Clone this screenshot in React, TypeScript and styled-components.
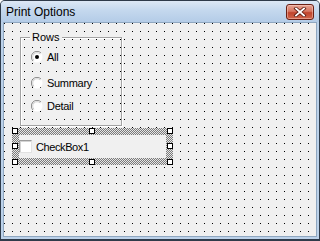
import React from 'react'
import styled, { createGlobalStyle } from 'styled-components'

const Global = createGlobalStyle`
  html, body {
    margin: 0;
    padding: 0;
    background: #fff;
  }
  body {
    font-family: "Liberation Sans", Arial, sans-serif;
  }
`

const dots = `
  background-color: #f0f0f0;
  background-image:
    linear-gradient(90deg, #f0f0f0 7px, transparent 7px),
    linear-gradient(#f0f0f0 7px, #000 7px);
  background-size: 8px 8px;
`

const Window = styled.div`
  width: 320px;
  height: 241px;
  box-sizing: border-box;
  display: flex;
  flex-direction: column;
  border: 1px solid #2f3b4a;
  border-bottom-width: 2px;
  border-radius: 5px 5px 0 0;
  background: #bcd2ea;
  overflow: hidden;
`

const TitleBar = styled.div`
  height: 21px;
  flex: none;
  display: flex;
  align-items: center;
  justify-content: space-between;
  padding: 0 5px 0 5px;
  background: linear-gradient(#dde8f5, #c4d8ee 45%, #b4cce7);
`

const Title = styled.span`
  font-size: 12px;
  color: #000;
  padding-top: 1px;
`

const CloseButton = styled.div`
  width: 26px;
  height: 14px;
  margin-top: 1px;
  display: flex;
  align-items: center;
  justify-content: center;
  border: 1px solid #6a1f14;
  border-radius: 3px;
  background: linear-gradient(#e8a595, #d67560 45%, #c0442c 55%, #d0664c);
  box-shadow: inset 0 0 0 1px rgba(255, 220, 210, 0.45);
`

const Frame = styled.div`
  flex: 1;
  display: flex;
  padding: 0 2px 2px 2px;
`

const Client = styled.div`
  flex: 1;
  border: 1px solid #8fa7c0;
  display: flex;
  flex-direction: column;
  align-items: flex-start;
  ${dots}
  background-position: 1px 1px;
`

const Fieldset = styled.fieldset`
  box-sizing: border-box;
  margin: 8px 0 0 16px;
  padding: 0;
  width: 102px;
  height: 95px;
  border: 1px solid #a3a3a3;
  box-shadow: inset 1px 1px 0 #fff, 1px 1px 0 #fff;
  ${dots}
  background-position: 4px 2px;
  display: flex;
  flex-direction: column;
`

const Legend = styled.legend`
  margin-left: 9px;
  padding: 0 2px;
  font-size: 11px;
  line-height: 13px;
  color: #000;
  background: #f0f0f0;
`

const OptionRow = styled.label<{ $offset: number }>`
  display: flex;
  align-items: center;
  gap: 4px;
  margin: ${(p) => p.$offset}px 0 0 10px;
  height: 14px;
  font-size: 11px;
  letter-spacing: -0.3px;
  color: #000;
`

const Label = styled.span`
  background: #f0f0f0;
  line-height: 13px;
`

const Selection = styled.div`
  position: relative;
  box-sizing: border-box;
  width: 161px;
  height: 37px;
  margin: 2px 0 0 8px;
  padding: 7px;
  background-color: #f0f0f0;
  background-image: repeating-conic-gradient(#7a7a7a 0 25%, #e6e6e6 0 50%);
  background-size: 2px 2px;
`

const CheckInner = styled.div`
  height: 100%;
  background: #f0f0f0;
  display: flex;
  align-items: center;
  gap: 4px;
  font-size: 11px;
  letter-spacing: -0.4px;
`

const CheckBox = styled.span`
  box-sizing: border-box;
  width: 13px;
  height: 13px;
  background: #fff;
  border: 1px solid;
  border-color: #9c9c9c #e2e2e2 #e2e2e2 #9c9c9c;
  box-shadow: inset 1px 1px 0 #d4d4d4;
`

const Handle = styled.span<{ $x: string; $y: string }>`
  position: absolute;
  width: 6px;
  height: 6px;
  box-sizing: border-box;
  background: #fff;
  border: 1px solid #000;
  left: ${(p) => p.$x};
  top: ${(p) => p.$y};
`

const Radio = ({ checked }: { checked?: boolean }) => (
  <svg width="12" height="12" viewBox="0 0 12 12">
    <circle cx="6" cy="6" r="5.5" fill="#fff" />
    <path d="M10 2 A5.5 5.5 0 0 0 2 10" fill="none" stroke="#8c8c8c" strokeWidth="1" />
    <path d="M9.2 3 A4.3 4.3 0 0 0 3 9.2" fill="none" stroke="#cfcfcf" strokeWidth="1" />
    {checked && <circle cx="6" cy="6" r="2" fill="#000" />}
  </svg>
)

const CloseGlyph = () => (
  <svg width="14" height="10" viewBox="0 0 14 10">
    <path d="M3 1.5 L11 8.5 M11 1.5 L3 8.5" stroke="#5a1a10" strokeWidth="3.4" strokeLinecap="square" />
    <path d="M3 1.5 L11 8.5 M11 1.5 L3 8.5" stroke="#fff" strokeWidth="1.8" strokeLinecap="square" />
  </svg>
)

const handles: [string, string][] = [
  ['0px', '0px'],
  ['77px', '0px'],
  ['155px', '0px'],
  ['0px', '15px'],
  ['155px', '15px'],
  ['0px', '31px'],
  ['77px', '31px'],
  ['155px', '31px'],
]

export default function App() {
  return (
    <>
      <Global />
      <Window>
        <TitleBar>
          <Title>Print Options</Title>
          <CloseButton>
            <CloseGlyph />
          </CloseButton>
        </TitleBar>
        <Frame>
          <Client>
            <Fieldset>
              <Legend>Rows</Legend>
              <OptionRow $offset={6}>
                <Radio checked />
                <Label>All</Label>
              </OptionRow>
              <OptionRow $offset={12}>
                <Radio />
                <Label>Summary</Label>
              </OptionRow>
              <OptionRow $offset={9}>
                <Radio />
                <Label>Detail</Label>
              </OptionRow>
            </Fieldset>
            <Selection>
              <CheckInner>
                <CheckBox />
                <span>CheckBox1</span>
              </CheckInner>
              {handles.map(([x, y], i) => (
                <Handle key={i} $x={x} $y={y} />
              ))}
            </Selection>
          </Client>
        </Frame>
      </Window>
    </>
  )
}
